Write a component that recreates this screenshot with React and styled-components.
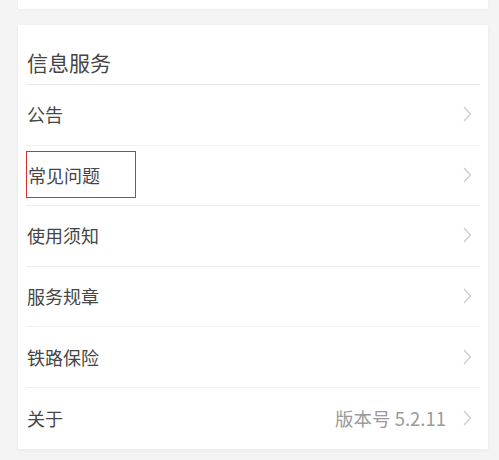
import React from 'react';
import styled, { createGlobalStyle } from 'styled-components';

const GlobalStyle = createGlobalStyle`
  html, body {
    margin: 0;
    padding: 0;
    background: #f4f4f4;
    font-family: "Noto Sans CJK SC", "Noto Sans", sans-serif;
  }
`;

const items = [
  { label: '公告' },
  { label: '常见问题', marked: true },
  { label: '使用须知' },
  { label: '服务规章' },
  { label: '铁路保险' },
  { label: '关于', extra: '版本号 5.2.11', last: true },
];

const Chevron = () => (
  <svg width="9" height="16" viewBox="0 0 9 16" aria-hidden="true">
    <path d="M1 1l6.5 7L1 15" fill="none" stroke="#cacaca" strokeWidth="1.2" />
  </svg>
);

const App = () => {
  return (
    <Page>
      <GlobalStyle />
      <TopCard />
      <Card>
        <Header>信息服务</Header>
        {items.map((it) => (
          <Row key={it.label} $last={it.last}>
            <Label $marked={it.marked}>{it.label}</Label>
            <Right>
              {it.extra && <Extra>{it.extra}</Extra>}
              <Chevron />
            </Right>
          </Row>
        ))}
      </Card>
    </Page>
  );
};

const Page = styled.div`
  padding: 0 11px 0 18px;
  height: 460px;
  box-sizing: border-box;
  overflow: hidden;
`;

const TopCard = styled.div`
  height: 9px;
  background: #fff;
  box-shadow: 0 1px 3px rgba(0, 0, 0, 0.04);
`;

const Card = styled.div`
  margin-top: 16px;
  background: #fff;
  box-shadow: 0 1px 4px rgba(0, 0, 0, 0.05);
  padding: 0 8px;
`;

const Header = styled.div`
  height: 60px;
  box-sizing: border-box;
  padding: 14px 0 0 1px;
  display: flex;
  align-items: center;
  font-size: 21px;
  color: #444;
  border-bottom: 1px solid #e8e8e8;
`;

const Row = styled.div`
  height: 60.6px;
  box-sizing: border-box;
  display: flex;
  align-items: center;
  justify-content: space-between;
  border-bottom: ${(p) => (p.$last ? 'none' : '1px solid #efefef')};
`;

const Label = styled.span`
  font-size: 18px;
  color: #464646;
  padding-left: 1px;
  margin-top: -1px;
  ${(p) =>
    p.$marked &&
    `
    box-sizing: border-box;
    height: 47px;
    line-height: 47px;
    padding: 0 35px 0 1px;
    border: 1px solid #d9302c;
  `}
`;

const Right = styled.div`
  display: flex;
  align-items: center;
  gap: 17px;
  padding-right: 8px;
  margin-top: -1px;
`;

const Extra = styled.span`
  font-size: 18.5px;
  color: #9a9a9a;
`;

export default App;
